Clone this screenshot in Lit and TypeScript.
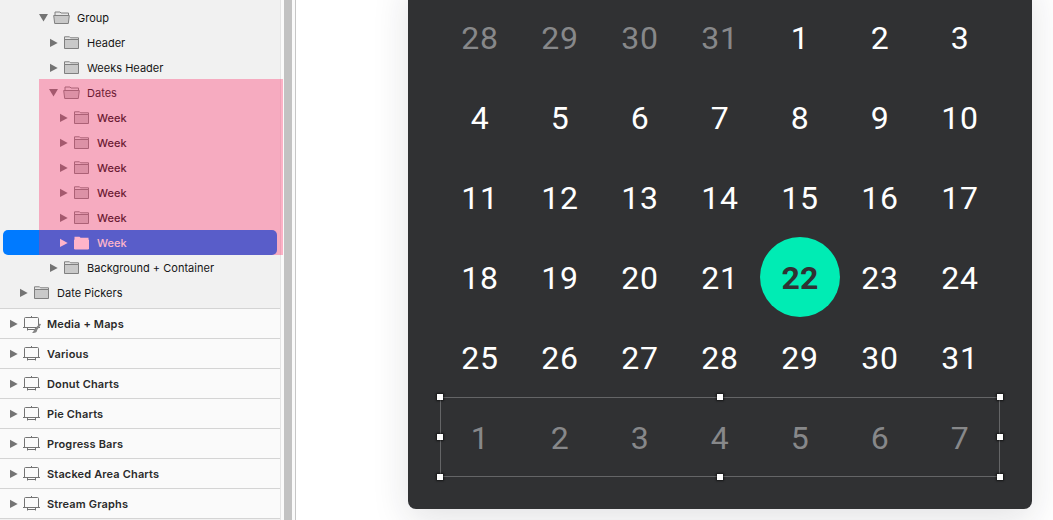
import { LitElement, html, svg, css, nothing } from "lit";
import { customElement, property } from "lit/decorators.js";
import { classMap } from "lit/directives/class-map.js";

interface Layer {
  name: string;
  depth: number;
  open?: boolean;
  selected?: boolean;
}

interface PageItem {
  name: string;
  editing?: boolean;
}

const LAYERS: Layer[] = [
  { name: "Group", depth: 2, open: true },
  { name: "Header", depth: 3 },
  { name: "Weeks Header", depth: 3 },
  { name: "Dates", depth: 3, open: true },
  { name: "Week", depth: 4 },
  { name: "Week", depth: 4 },
  { name: "Week", depth: 4 },
  { name: "Week", depth: 4 },
  { name: "Week", depth: 4 },
  { name: "Week", depth: 4, selected: true },
  { name: "Background + Container", depth: 3 },
  { name: "Date Pickers", depth: 0 },
];

const PAGES: PageItem[] = [
  { name: "Media + Maps", editing: true },
  { name: "Various" },
  { name: "Donut Charts" },
  { name: "Pie Charts" },
  { name: "Progress Bars" },
  { name: "Stacked Area Charts" },
  { name: "Stream Graphs" },
];

const WEEKS = [
  [28, 29, 30, 31, 1, 2, 3],
  [4, 5, 6, 7, 8, 9, 10],
  [11, 12, 13, 14, 15, 16, 17],
  [18, 19, 20, 21, 22, 23, 24],
  [25, 26, 27, 28, 29, 30, 31],
  [1, 2, 3, 4, 5, 6, 7],
];

const arrow = (open = false) => html`
  <svg class="arrow" width="10" height="10" viewBox="0 0 10 10">
    <path d=${open ? "M0 1H9L4.5 8.5Z" : "M1 0.8L8.7 4.9L1 9Z"} />
  </svg>
`;

const folder = (open = false) => html`
  <svg class="folder" width="18" height="14" viewBox="0 0 18 14">
    ${open
      ? svg`
          <path class="back" d="M2 5V1H7L8 2H15.5V5" />
          <path class="front" d="M0.7 4.5H16.3L15.3 12.5H1.7Z" />
        `
      : svg`
          <path class="back" d="M1.5 4.5V0.8H6.5L7.5 1.8H15.5V4.5" />
          <path class="front" d="M1.5 3.5H15.5V12.5H1.5Z" />
        `}
  </svg>
`;

const artboard = (editing = false) => html`
  <svg class="artboard" width="18" height="16" viewBox="0 0 18 16">
    <path d="M8.5 0V1.5M1.5 11.5V2.5Q1.5 1.5 2.5 1.5H14.5Q15.5 1.5 15.5 2.5V11.5M0 11.5H17M4.5 12V14.5M12.5 12V14.5M4.5 13.5H12.5" />
    ${editing
      ? svg`<path class="pen" d="M16.8 7.6L12.2 12.4C10.6 13 11.2 15.4 9 16.8C11.8 17.4 14.2 16.4 14.2 14L18 8.6Z" />`
      : nothing}
  </svg>
`;

@customElement("layer-list")
export class LayerList extends LitElement {
  static styles = css`
    :host {
      display: block;
      position: relative;
      width: 280px;
      height: 520px;
      background: #f1f1f1;
      border-right: 1px solid #e4e4e4;
      font: 400 11px/24px Inter, sans-serif;
      letter-spacing: 0.02px;
      color: #161616;
    }
    .tree {
      height: 303px;
      padding-top: 5px;
    }
    .row {
      display: flex;
      align-items: center;
      box-sizing: border-box;
      height: 25px;
      margin: 0 3px;
      padding-top: 1px;
      border-radius: 5px;
    }
    .arrow {
      flex: none;
      fill: #747474;
    }
    .folder {
      flex: none;
      margin: 0 6px 0 4px;
      fill: #c9c9c9;
      stroke: #808080;
    }
    .back {
      fill: #e6e6e6;
    }
    .selected {
      background: #007aff;
      color: #fff;
    }
    .selected .arrow {
      fill: #fff;
    }
    .selected .front {
      fill: #fff;
      stroke: #fff;
      transform: translateY(0.5px);
    }
    .selected .back {
      fill: #fff;
      stroke: none;
    }
    .nested {
      font-weight: 500;
    }
    .pages {
      border-bottom: 1px solid #d4d4d4;
    }
    .page {
      display: flex;
      align-items: center;
      box-sizing: border-box;
      height: 30px;
      padding: 1px 0 0 9px;
      border-top: 1px solid #d4d4d4;
      background: #fafafa;
      color: #2a2a2a;
      font-weight: 600;
      letter-spacing: 0.15px;
    }
    .artboard {
      flex: none;
      margin: 0 6px 0 4px;
      overflow: visible;
      fill: none;
      stroke: #737373;
    }
    .pen {
      fill: #858585;
      stroke: none;
    }
    .highlight {
      position: absolute;
      top: 79px;
      left: 39px;
      width: 244px;
      height: 176px;
      background: rgba(255, 40, 100, 0.35);
      pointer-events: none;
    }
  `;

  render() {
    return html`
      <div class="tree">
        ${LAYERS.map(
          (layer) => html`
            <div
              class=${classMap({
                row: true,
                nested: layer.depth > 3,
                selected: !!layer.selected,
              })}
              style="padding-left:${16 + layer.depth * 10}px"
            >
              ${arrow(layer.open)} ${folder(layer.open)}
              <span>${layer.name}</span>
            </div>
          `
        )}
      </div>
      <div class="pages">
        ${PAGES.map(
          (page) => html`
            <div class="page">
              ${arrow()} ${artboard(page.editing)}
              <span>${page.name}</span>
            </div>
          `
        )}
      </div>
      <div class="highlight"></div>
    `;
  }
}

@customElement("date-picker")
export class DatePicker extends LitElement {
  static styles = css`
    :host {
      display: block;
      box-sizing: border-box;
      width: 624px;
      height: 529px;
      padding: 17px 32px 0;
      background: #303133;
      border-radius: 8px;
      box-shadow: 0 10px 36px rgba(30, 34, 50, 0.13);
      font: 400 32px/80px Roboto, sans-serif;
      letter-spacing: 0.7px;
      color: #fff;
    }
    .week {
      position: relative;
      display: grid;
      grid-template-columns: repeat(7, 80px);
      height: 80px;
    }
    .day {
      box-sizing: border-box;
      height: 80px;
      padding-top: 1px;
      text-align: center;
    }
    .outside {
      color: #87888a;
    }
    .today {
      border-radius: 50%;
      background: #00ecb4;
      color: #303133;
      font-weight: 700;
      letter-spacing: 0.2px;
    }
    .frame {
      position: absolute;
      inset: 0;
      border: 1px solid #646567;
    }
    .handle {
      position: absolute;
      width: 6px;
      height: 6px;
      margin: -4px;
      background: #fff;
      box-shadow: 0 0 2px 1px rgba(0, 0, 0, 0.55);
    }
  `;

  @property({ type: Number }) today = 22;

  render() {
    return WEEKS.map(
      (week, i) => html`
        <div class="week">
          ${week.map((day) => this.renderDay(day, i))}
          ${i === WEEKS.length - 1 ? this.renderSelection() : nothing}
        </div>
      `
    );
  }

  renderDay(day: number, week: number) {
    const outside = (week === 0 && day > 7) || week === 5;
    const classes = { day: true, outside, today: day === this.today };
    return html`<div class=${classMap(classes)}>${day}</div>`;
  }

  renderSelection() {
    const points = [0, 50, 100];
    return html`
      <div class="frame">
        ${points.map((y) =>
          points.map((x) =>
            x === 50 && y === 50
              ? nothing
              : html`<i
                  class="handle"
                  style="left:calc(${x}% + ${x / 50}px);top:calc(${y}% + ${y / 50}px)"
                ></i>`
          )
        )}
      </div>
    `;
  }
}

@customElement("app-root")
export class AppRoot extends LitElement {
  static styles = css`
    :host {
      display: flex;
      width: 1053px;
      height: 520px;
      overflow: hidden;
      background: #fff;
    }
    layer-list {
      flex: none;
      z-index: 1;
    }
    .divider {
      flex: none;
      box-sizing: border-box;
      width: 14px;
      border: solid #fafafa;
      border-width: 0 3px;
      background: #c2c2c2;
    }
    .edge {
      flex: none;
      width: 1px;
      background: #c6c6c6;
    }
    .canvas {
      flex: 1;
      display: flex;
      align-items: flex-start;
      overflow: hidden;
      padding-left: 112px;
    }
    date-picker {
      flex: none;
      margin-top: -20px;
    }
  `;

  render() {
    return html`
      <layer-list></layer-list>
      <div class="divider"></div>
      <div class="edge"></div>
      <div class="canvas"><date-picker></date-picker></div>
    `;
  }
}
